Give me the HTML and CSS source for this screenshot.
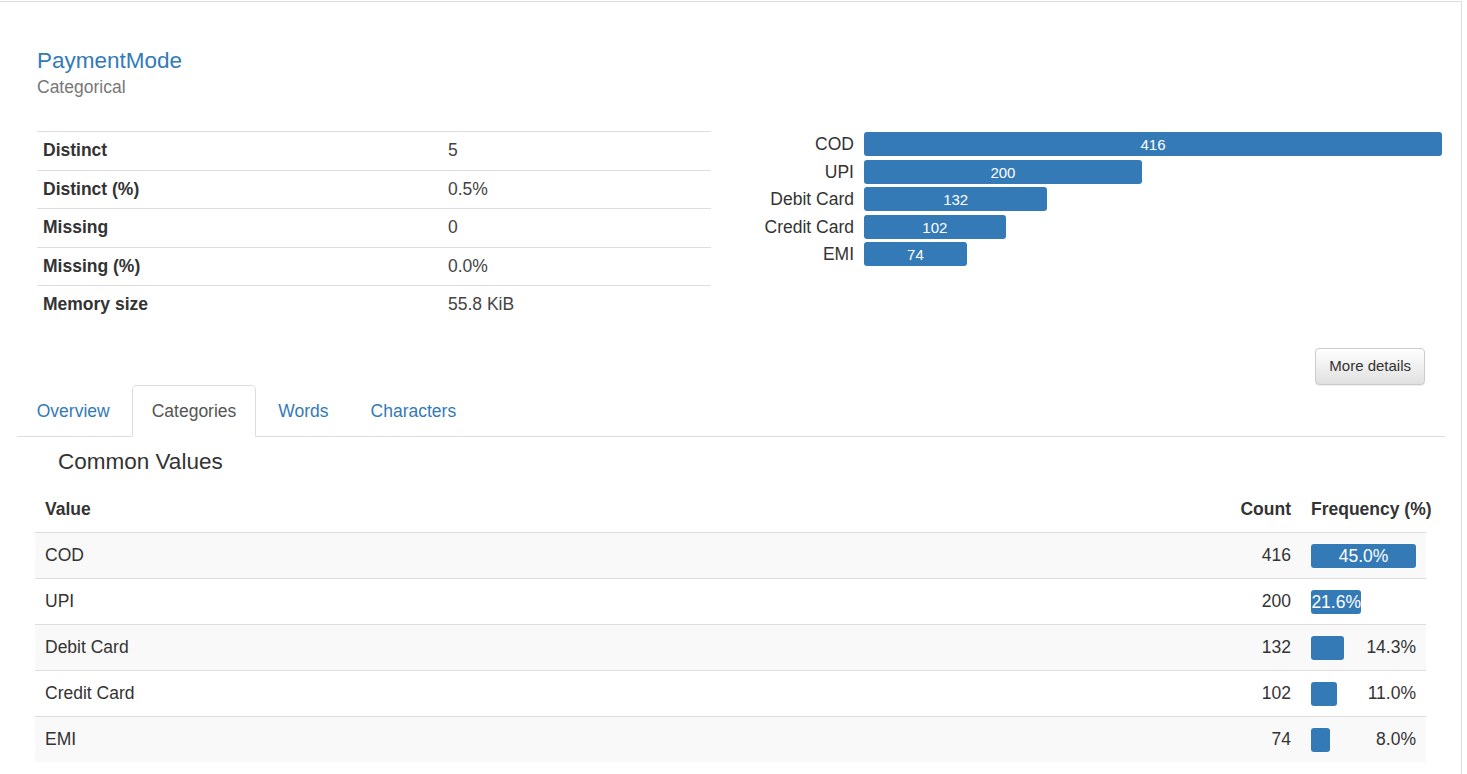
FILE: index.html
```html
<!DOCTYPE html>
<html>
<head>
<meta charset="utf-8">
<link rel="stylesheet" href="styles.css">
</head>
<body>
<div class="panel">
  <div class="var-header">
    <div class="var-title">PaymentMode</div>
    <div class="var-type">Categorical</div>
  </div>

  <div class="stats-row">
    <div class="col">
      <table class="stats">
        <tr><th>Distinct</th><td>5</td></tr>
        <tr><th>Distinct (%)</th><td>0.5%</td></tr>
        <tr><th>Missing</th><td>0</td></tr>
        <tr><th>Missing (%)</th><td>0.0%</td></tr>
        <tr><th>Memory size</th><td>55.8 KiB</td></tr>
      </table>
    </div>
    <div class="col">
      <div class="chart">
        <div class="chart-row"><span class="chart-label">COD</span><div class="chart-track"><div class="chart-bar" style="width:100%">416</div></div></div>
        <div class="chart-row"><span class="chart-label">UPI</span><div class="chart-track"><div class="chart-bar" style="width:48.08%">200</div></div></div>
        <div class="chart-row"><span class="chart-label">Debit Card</span><div class="chart-track"><div class="chart-bar" style="width:31.73%">132</div></div></div>
        <div class="chart-row"><span class="chart-label">Credit Card</span><div class="chart-track"><div class="chart-bar" style="width:24.52%">102</div></div></div>
        <div class="chart-row"><span class="chart-label">EMI</span><div class="chart-track"><div class="chart-bar" style="width:17.79%">74</div></div></div>
      </div>
    </div>
  </div>

  <div class="btn-row">
    <button class="btn">More details</button>
  </div>

  <ul class="tabs">
    <li><a>Overview</a></li>
    <li class="active"><a>Categories</a></li>
    <li><a>Words</a></li>
    <li><a>Characters</a></li>
  </ul>

  <div class="tab-content">
    <h4 class="section-title">Common Values</h4>
    <table class="freq">
      <colgroup>
        <col>
        <col class="col-count">
        <col class="col-freq">
      </colgroup>
      <thead>
        <tr><th>Value</th><th class="num">Count</th><th class="freq-head">Frequency (%)</th></tr>
      </thead>
      <tbody>
        <tr><td>COD</td><td class="num">416</td><td><div class="fbar-wrap"><div class="fbar inside" style="width:100%">45.0%</div></div></td></tr>
        <tr><td>UPI</td><td class="num">200</td><td><div class="fbar-wrap"><div class="fbar inside" style="width:48%">21.6%</div></div></td></tr>
        <tr><td>Debit Card</td><td class="num">132</td><td><div class="fbar-wrap"><div class="fbar" style="width:31.8%"></div><span class="fval">14.3%</span></div></td></tr>
        <tr><td>Credit Card</td><td class="num">102</td><td><div class="fbar-wrap"><div class="fbar" style="width:24.4%"></div><span class="fval">11.0%</span></div></td></tr>
        <tr><td>EMI</td><td class="num">74</td><td><div class="fbar-wrap"><div class="fbar" style="width:17.8%"></div><span class="fval">8.0%</span></div></td></tr>
      </tbody>
    </table>
  </div>
</div>
</body>
</html>
```

FILE: styles.css
```css
* { box-sizing: border-box; }

html, body {
  margin: 0;
  padding: 0;
  background: #fff;
}

body {
  font-family: "Liberation Sans", Arial, Helvetica, sans-serif;
  font-size: 17.5px;
  line-height: 25px;
  color: #333;
}

.panel {
  width: 1462px;
  margin-top: 1px;
  border-top: 1px solid #ddd;
  border-right: 1px solid #ddd;
  padding: 0 16px 40px 17px;
}

.var-header {
  padding: 45px 20px 0 20px;
}

.var-title {
  font-size: 22.5px;
  line-height: 27px;
  color: #337ab7;
}

.var-type {
  margin-top: 1px;
  color: #777;
  line-height: 25px;
}

.stats-row {
  display: flex;
  margin-top: 31px;
}

.col {
  width: 714px;
  padding: 0 20px;
}

.stats {
  width: 674px;
  border-collapse: collapse;
  table-layout: fixed;
}

.stats th,
.stats td {
  padding: 6.25px 6px;
  line-height: 25px;
  text-align: left;
  vertical-align: top;
  border-top: 1px solid #ddd;
}

.stats th {
  width: 405px;
  font-weight: bold;
}

.stats td {
  color: #444;
}

.chart {
  width: 691px;
  padding-top: 1px;
  display: flex;
  flex-direction: column;
  gap: 3.5px;
}

.chart-row {
  display: flex;
  align-items: center;
  height: 24px;
  gap: 10px;
}

.chart-label {
  width: 103px;
  flex: none;
  text-align: right;
  color: #333;
  white-space: nowrap;
  line-height: 24px;
}

.chart-track {
  width: 578px;
  height: 24px;
  flex: none;
}

.chart-bar {
  height: 24px;
  background: #337ab7;
  border-radius: 3px;
  color: #fff;
  font-size: 15px;
  line-height: 26px;
  text-align: center;
}

.btn-row {
  display: flex;
  justify-content: flex-end;
  padding-right: 20px;
  margin-top: 24.5px;
}

.btn {
  font-family: inherit;
  font-size: 15px;
  line-height: 22.5px;
  height: 37px;
  padding: 6.25px 13px;
  color: #333;
  border: 1px solid #ccc;
  border-radius: 4px;
  background: linear-gradient(to bottom, #fff 0%, #e0e0e0 100%);
  box-shadow: inset 0 1px 0 rgba(255,255,255,.15), 0 1px 1px rgba(0,0,0,.075);
}

.tabs {
  list-style: none;
  margin: 0;
  padding: 0;
  display: flex;
  border-bottom: 1px solid #ddd;
}

.tabs li {
  margin-bottom: -1px;
  margin-right: 2.5px;
}

.tabs a {
  display: block;
  padding: 12.5px 18.75px;
  line-height: 25px;
  border: 1px solid transparent;
  border-radius: 5px 5px 0 0;
  color: #337ab7;
}

.tabs li.active a {
  color: #555;
  background: #fff;
  border-color: #ddd #ddd transparent #ddd;
}

.section-title {
  margin: 11.5px 0 13.5px 0;
  padding-left: 41px;
  font-size: 22.5px;
  line-height: 25px;
  font-weight: normal;
  color: #333;
}

.freq {
  margin-left: 18px;
  width: 1391px;
  border-collapse: collapse;
  table-layout: fixed;
}

.col-count { width: 90px; }
.col-freq { width: 125px; }

.freq th,
.freq td {
  padding: 10px;
  line-height: 25px;
  text-align: left;
  vertical-align: middle;
}

.freq th {
  font-weight: bold;
  white-space: nowrap;
}

.freq td {
  border-top: 1px solid #ddd;
}

.freq tbody tr:nth-child(odd) td {
  background: #f9f9f9;
}

.freq .num {
  text-align: right;
}

.freq-head {
  overflow: visible;
}

.fbar-wrap {
  display: flex;
  align-items: center;
  height: 25px;
}

.fbar {
  height: 24px;
  background: #337ab7;
  border-radius: 3px;
  flex: none;
}

.fbar.inside {
  color: #fff;
  text-align: center;
  line-height: 24px;
  white-space: nowrap;
}

.fval {
  margin-left: auto;
  white-space: nowrap;
}
```
